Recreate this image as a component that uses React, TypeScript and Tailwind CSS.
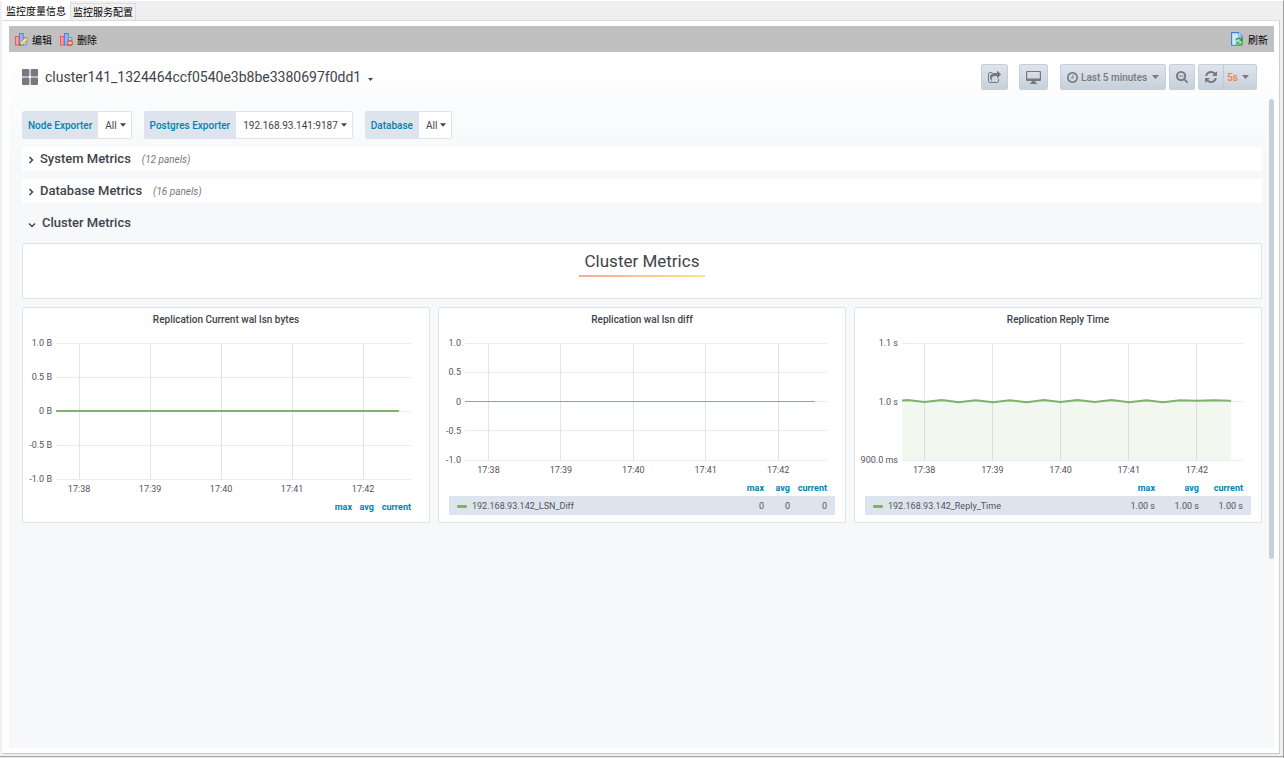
import React, { useId, useState } from "react";

const FA_CLOCK =
  "M896 544v448q0 14-9 23t-23 9h-320q-14 0-23-9t-9-23v-64q0-14 9-23t23-9h224v-352q0-14 9-23t23-9h64q14 0 23 9t9 23zm416 352q0-148-73-273t-198-198-273-73-273 73-198 198-73 273 73 273 198 198 273 73 273-73 198-198 73-273zm224 0q0 209-103 385.5t-279.5 279.5-385.5 103-385.5-103-279.5-279.5-103-385.5 103-385.5 279.5-279.5 385.5-103 385.5 103 279.5 279.5 103 385.5z";
const FA_REFRESH =
  "M1511 928q0 5-1 7-64 268-268 434.5t-478 166.5q-146 0-282.5-55t-243.5-157l-129 129q-19 19-45 19t-45-19-19-45v-448q0-26 19-45t45-19h448q26 0 45 19t19 45-19 45l-137 137q71 66 161 102t187 36q134 0 250-65t186-179q11-17 53-117 8-23 30-23h192q13 0 22.5 9.5t9.5 22.5zm25-800v448q0 26-19 45t-45 19h-448q-26 0-45-19t-19-45 19-45l138-138q-148-137-349-137-134 0-250 65t-186 179q-11 17-53 117-8 23-30 23h-199q-13 0-22.5-9.5t-9.5-22.5v-7q65-268 270-434.5t480-166.5q146 0 284 55.5t245 156.5l130-129q19-19 45-19t45 19 19 45z";
const FA_SEARCH_MINUS =
  "M1024 736v64q0 13-9.5 22.5t-22.5 9.5h-576q-13 0-22.5-9.5t-9.5-22.5v-64q0-13 9.5-22.5t22.5-9.5h576q13 0 22.5 9.5t9.5 22.5zm128 32q0-185-131.5-316.5t-316.5-131.5-316.5 131.5-131.5 316.5 131.5 316.5 316.5 131.5 316.5-131.5 131.5-316.5zm512 832q0 53-37.5 90.5t-90.5 37.5q-54 0-90-38l-343-342q-179 124-399 124-143 0-273.5-55.5t-225-150-150-225-55.5-273.5 55.5-273.5 150-225 225-150 273.5-55.5 273.5 55.5 225 150 150 225 55.5 273.5q0 220-124 399l343 343q37 37 37 90z";
const FA_SHARE =
  "M1408 989v259q0 119-84.5 203.5t-203.5 84.5h-832q-119 0-203.5-84.5t-84.5-203.5v-832q0-119 84.5-203.5t203.5-84.5h255q13 0 22.5 9.5t9.5 22.5q0 27-26 32-77 26-133 60-10 4-16 4h-112q-66 0-113 47t-47 113v832q0 66 47 113t113 47h832q66 0 113-47t47-113v-214q0-19 18-29 28-13 54-37 16-16 35-8 21 9 21 29zm237-496l-384 384q-18 19-45 19-12 0-25-5-39-17-39-59v-192h-160q-323 0-438 131-119 137-74 473 3 23-20 34-8 2-12 2-16 0-26-13-10-14-21-31t-39.5-68.5-49.5-99.5-38.5-114-17.5-122q0-49 3.5-91t14-90 28-88 47-81.5 68.5-74 94.5-61.5 124.5-48.5 159.5-30.5 196.5-11h160v-192q0-42 39-59 13-5 25-5 26 0 45 19l384 384q19 19 19 45t-19 45z";

function Glyph({ d, box, className }: { d: string; box: string; className: string }) {
  return (
    <svg viewBox={box} className={className} fill="currentColor" aria-hidden="true">
      <path d={d} />
    </svg>
  );
}

function Caret({ className = "h-1 w-[7px]" }: { className?: string }) {
  return (
    <svg viewBox="0 0 7 4" className={className} fill="currentColor" aria-hidden="true">
      <path d="M0 0h7L3.5 4z" />
    </svg>
  );
}

function ChartBars() {
  return (
    <>
      <rect x="0.4" y="3.4" width="3.6" height="8.600" fill="#ff9c9c" stroke="#e84a4a" strokeWidth="0.8" />
      <rect x="4.4" y="0.4" width="3.8" height="11.600" fill="#8db9ff" stroke="#3f76e4" strokeWidth="0.8" />
      <rect x="8.600" y="4.4" width="3.2" height="7.600" fill="#b9d3fb" stroke="#5b8be8" strokeWidth="0.8" />
    </>
  );
}

function EditIcon() {
  return (
    <svg viewBox="0 0 13 13" className="h-[13px] w-[13px]" aria-hidden="true">
      <ChartBars />
      <path d="M4.800 12.500l.7-3.200L10.700 4.300l2.100 2.200-5.200 5.200z" fill="#fbdc85" stroke="#b98a3a" strokeWidth=".7" />
      <path d="M4.600 12.700l.4-1.700 1.300 1.300z" fill="#6a4516" />
    </svg>
  );
}

function DeleteIcon() {
  return (
    <svg viewBox="0 0 13 13" className="h-[13px] w-[13px]" aria-hidden="true">
      <ChartBars />
      <circle cx="10" cy="10" r="2.800" fill="#f36c2e" stroke="#d04c14" strokeWidth=".5" />
      <rect x="8.300" y="9.400" width="3.400" height="1.200" fill="#fff" />
    </svg>
  );
}

function ReloadIcon() {
  return (
    <svg viewBox="0 0 13 14" className="h-[14px] w-[13px]" aria-hidden="true">
      <path d="M.6.6h7l3.200 3.200v9.400H.6z" fill="#d3e7fc" stroke="#3d80d0" strokeWidth="1.100" />
      <path d="M7.600.6v3.200h3.200" fill="#fff" stroke="#3d80d0" strokeWidth=".7" />
      <path d="M4.300 8.200C5 5.300 8.700 4.600 10.600 6.200l1.500-1.100v4.200H7.700l1.400-1.400C8 7 6.300 7.200 5.900 8.400z" fill="#3fa548" />
      <path d="M12.700 10.200c-.8 3-4.400 3.700-6.400 2.100l-1.400 1.200V9.500h4.300l-1.400 1.300c1 .9 2.900.7 3.300-.6z" fill="#5cba52" />
    </svg>
  );
}

const navButton =
  "flex h-[26px] items-center justify-center rounded-[2px] border border-[#c7d0d9] bg-gradient-to-b from-[#dde4ed] to-[#c7d0d9] text-[#767980]";

function Variable({ label, value }: { label: string; value: string }) {
  const id = useId();
  return (
    <div className="flex h-7 items-stretch">
      <label
        htmlFor={id}
        className="flex items-center rounded-l-[2px] border border-[#dde4ed] bg-[#dde4ed] px-[5px] text-[10px] font-medium text-[#0083b3]"
      >
        {label}
      </label>
      <div className="relative flex items-center rounded-r-[2px] border border-l-0 border-[#dde4ed] bg-white text-[#41444b]">
        <select id={id} className="field-sizing-content h-full appearance-none bg-transparent pr-[14px] pl-[7px] text-[10px] outline-none">
          <option>{value}</option>
        </select>
        <span className="pointer-events-none absolute right-[5px]">
          <Caret className="h-1 w-1.5" />
        </span>
      </div>
    </div>
  );
}

function Chevron({ open }: { open: boolean }) {
  return (
    <svg viewBox="0 0 8 8" className="h-2 w-2" fill="none" stroke="currentColor" strokeWidth="1.5" aria-hidden="true">
      <path d={open ? "M1 2.500l3 3 3-3" : "M2.500 1l3 3-3 3"} />
    </svg>
  );
}

function CollapsedRow({ title, count }: { title: string; count: number }) {
  return (
    <button type="button" aria-expanded={false} className="flex h-6 w-full items-center bg-white pl-[5px] text-left">
      <span className="mt-0.5 text-[#41444b]">
        <Chevron open={false} />
      </span>
      <span className="ml-[5px] text-[13px] font-medium text-[#41444b]">{title}</span>
      <span className="ml-[11px] text-[10px] text-[#767980] italic">({count} panels)</span>
    </button>
  );
}

const times = ["17:38", "17:39", "17:40", "17:41", "17:42"];
const tickAt = [6.5, 26.5, 46.5, 66.5, 86.5];

type Series = { points: string; thick: boolean; filled: boolean };

function Plot({ labels, series, axisClass, heightClass, height }: {
  labels: string[];
  series: Series;
  axisClass: string;
  heightClass: string;
  height: number;
}) {
  return (
    <div className="flex pr-[18px]">
      <div className={`-my-[5px] flex shrink-0 flex-col justify-between pr-1 text-right text-[9px] leading-[10px] whitespace-nowrap ${axisClass}`}>
        {labels.map((l) => (
          <span key={l}>{l}</span>
        ))}
      </div>
      <svg className={`min-w-0 flex-1 overflow-visible ${heightClass}`} aria-hidden="true">
        {labels.map((l, i) => {
          const y = `${(i * 100) / (labels.length - 1)}%`;
          return <line key={l} x1="0" x2="100%" y1={y} y2={y} stroke="#ebebeb" shapeRendering="crispEdges" />;
        })}
        {tickAt.map((x) => (
          <line key={x} x1={`${x}%`} x2={`${x}%`} y1="0" y2="100%" stroke="#e4e4e4" shapeRendering="crispEdges" />
        ))}
        <svg width="100%" height="100%" viewBox="0 0 100 100" preserveAspectRatio="none">
          {series.filled && <polygon points={`0,100 ${series.points} 96.5,100`} fill="#7eb26d" fillOpacity="0.1" />}
          <polyline
            points={series.points}
            fill="none"
            stroke="#7eb26d"
            strokeWidth={series.thick ? 2 : 1}
            vectorEffect="non-scaling-stroke"
            shapeRendering={series.thick ? "auto" : "crispEdges"}
          />
        </svg>
        {times.map((t, i) => (
          <text key={t} x={`${tickAt[i]}%`} y={height + 13} textAnchor="middle" fontSize="9" fill="#52545c">
            {t}
          </text>
        ))}
      </svg>
    </div>
  );
}

function Legend({ name, values, colClass, lastClass }: {
  name?: string;
  values?: string[];
  colClass: string;
  lastClass: string;
}) {
  return (
    <table className="w-full border-collapse text-[9px] leading-[12px]">
      <thead>
        <tr className="text-right text-[#0083b3]">
          <td />
          <th className={`pb-0.5 text-right font-bold ${colClass}`}>max</th>
          <th className={`pb-0.5 text-right font-bold ${colClass}`}>avg</th>
          <th className={`pr-2 pb-0.5 text-right font-bold ${lastClass}`}>current</th>
        </tr>
      </thead>
      {name && values && (
        <tbody>
          <tr className="h-[19px] bg-[#dde4ed] text-[#52545c]">
            <td className="pl-2">
              <span className="flex items-center gap-[5px]">
                <span className="mt-0.5 h-[3px] w-2.5 rounded-[1px] bg-[#7eb26d]" />
                {name}
              </span>
            </td>
            {values.map((v, i) => (
              <td key={i} className={i === 2 ? "pr-2 text-right" : "text-right"}>
                {v}
              </td>
            ))}
          </tr>
        </tbody>
      )}
    </table>
  );
}

function Panel({ title, children }: { title: string; children: React.ReactNode }) {
  return (
    <section className="flex h-[216px] min-w-0 flex-1 flex-col rounded-[2px] border border-[#dde4ed] bg-white text-[#52545c]">
      <h3 className="h-[35px] pt-1 text-center text-[10px] leading-4 font-medium text-[#41444b]">{title}</h3>
      {children}
    </section>
  );
}

const flat = "0,50 96.6,50";
const wave =
  "0,49.2 1.7,48.7 6.6,50.4 11.7,48.7 16.6,50.6 21.6,48.9 26.7,50.6 31.6,48.9 36.6,50.6 41.6,48.7 46.5,50.4 51.5,48.7 56.5,50.4 61.5,48.7 66.6,50.6 71.6,49 76.6,50.6 81.5,49 86.6,49.4 91.5,49 96.5,49.4";

export default function App() {
  const [tab, setTab] = useState(0);
  return (
    <div className="flex min-h-screen flex-col border-t border-r border-t-white border-r-[#a0a0a0] bg-[#efefef] font-['Roboto','Noto_Sans_CJK_SC',sans-serif] text-[#52545c]">
      <div role="tablist" className="flex h-[19px] items-end pl-0.5 font-['Noto_Sans_CJK_SC',sans-serif] text-[10px] leading-4 text-black">
        {["监控度量信息", "监控服务配置"].map((t, i) => (
          <button
            key={t}
            type="button"
            role="tab"
            aria-selected={tab === i}
            onClick={() => setTab(i)}
            className={
              tab === i
                ? "h-[19px] border-r border-[#dcdcdc] bg-white px-1"
                : "h-[17px] border-t border-r border-[#dcdcdc] bg-[#f0f0f0] px-0.5"
            }
          >
            {t}
          </button>
        ))}
      </div>
      <main className="mr-[3px] ml-0.5 flex flex-1 flex-col border border-t-[#dcdcdc] border-r-[#d0d0d0] border-b-[#c8c8c8] border-l-white bg-white pt-[5px] pr-[5px] pb-[5px] pl-1.5">
        <div className="flex h-[26px] items-center justify-between bg-[#c0c0c0] px-1.5 font-['Noto_Sans_CJK_SC',sans-serif] text-[10px] text-black">
          <div className="flex gap-2">
            <button type="button" className="flex items-center gap-1">
              <EditIcon />
              编辑
            </button>
            <button type="button" className="flex items-center gap-1">
              <DeleteIcon />
              删除
            </button>
          </div>
          <button type="button" className="flex items-center gap-1">
            <ReloadIcon />
            刷新
          </button>
        </div>

        <div className="relative flex-1 bg-[#f7f8fa] bg-[linear-gradient(180deg,#ffffff_0px,#f7f8fa_110px)] pr-3 pl-[13px]">
          <header className="flex h-[50px] items-center justify-between pr-[5px]">
            <button type="button" className="flex items-center text-[14px] text-[#41444b]">
              <svg viewBox="0 0 16 16" className="mr-[7px] h-4 w-4" fill="#767980" aria-hidden="true">
                <rect x="0" y="0" width="7.400" height="7.400" rx="1" />
                <rect x="8.600" y="0" width="7.400" height="7.400" rx="1" />
                <rect x="0" y="8.600" width="7.400" height="7.400" rx="1" />
                <rect x="8.600" y="8.600" width="7.400" height="7.400" rx="1" />
              </svg>
              cluster141_1324464ccf0540e3b8be3380697f0dd1
              <span className="mt-1 ml-[7px]">
                <Caret className="h-[3px] w-[5px]" />
              </span>
            </button>
            <div className="flex items-center">
              <button type="button" aria-label="Share" className={`${navButton} w-[27px]`}>
                <Glyph d={FA_SHARE} box="0 0 1664 1536" className="h-3 w-[13px]" />
              </button>
              <button type="button" aria-label="Cycle view mode" className={`${navButton} ml-[11px] w-[29px]`}>
                <svg viewBox="0 0 15 13" className="h-[13px] w-[15px]" fill="currentColor" aria-hidden="true">
                  <path fillRule="evenodd" d="M1 0h13a1 1 0 0 1 1 1v8a1 1 0 0 1-1 1H9.200l.5 1.700h1V13H4.300v-1.300h1L5.800 10H1a1 1 0 0 1-1-1V1a1 1 0 0 1 1-1zm.2 1.100v6.400h12.600V1.100z" />
                </svg>
              </button>
              <button type="button" className={`${navButton} ml-3 px-1.5 text-[10px] font-medium`}>
                <Glyph d={FA_CLOCK} box="0 128 1536 1536" className="mr-[3px] h-[11px] w-[11px]" />
                Last 5 minutes
                <Caret className="ml-[5px] h-1 w-[7px]" />
              </button>
              <button type="button" aria-label="Zoom out" className={`${navButton} ml-[3px] w-[26px]`}>
                <Glyph d={FA_SEARCH_MINUS} box="0 64 1664 1664" className="h-3 w-3" />
              </button>
              <div className={`${navButton} ml-[3px]`}>
                <button type="button" aria-label="Refresh dashboard" className="flex h-full w-[25px] items-center justify-center border-r border-[#c0c9d3]">
                  <Glyph d={FA_REFRESH} box="0 0 1536 1536" className="h-3 w-3" />
                </button>
                <span className="relative flex h-full items-center">
                  <select aria-label="Refresh interval" className="field-sizing-content h-full appearance-none bg-transparent pr-[18px] pl-[3px] text-[10px] font-medium text-[#ff7941] outline-none">
                    <option>5s</option>
                  </select>
                  <span className="pointer-events-none absolute right-[7px]">
                    <Caret />
                  </span>
                </span>
              </div>
            </div>
          </header>

          <div className="mt-[9px] flex gap-3">
            <Variable label="Node Exporter" value="All" />
            <Variable label="Postgres Exporter" value="192.168.93.141:9187" />
            <Variable label="Database" value="All" />
          </div>

          <div className="mt-2 flex flex-col gap-2">
            <CollapsedRow title="System Metrics" count={12} />
            <CollapsedRow title="Database Metrics" count={16} />
            <button type="button" aria-expanded className="flex h-6 w-full items-center pl-1.5 text-left text-[13px] font-medium text-[#41444b]">
              <span className="mt-1 mr-1.5">
                <Chevron open />
              </span>
              Cluster Metrics
            </button>
            <section className="flex h-14 flex-col items-center rounded-[2px] border border-[#dde4ed] bg-white pt-[5px]">
              <h2 className="px-[6px] text-[17px] leading-6 text-[#41444b]">
                Cluster Metrics
                <span className="-mx-[6px] mt-0.5 block h-0.5 bg-gradient-to-r from-[#f9a89b] to-[#fbe38a]" />
              </h2>
            </section>

            <div className="flex gap-2">
              <Panel title="Replication Current wal lsn bytes">
                <Plot
                  labels={["1.0 B", "0.5 B", "0 B", "-0.5 B", "-1.0 B"]}
                  series={{ points: flat, thick: true, filled: false }}
                  axisClass="w-[33px]"
                  heightClass="h-[136px]"
                  height={136}
                />
                <div className="px-[10px] pt-[22px]">
                  <Legend colClass="w-[22px]" lastClass="w-[45px]" />
                </div>
              </Panel>
              <Panel title="Replication wal lsn diff">
                <Plot
                  labels={["1.0", "0.5", "0", "-0.5", "-1.0"]}
                  series={{ points: flat, thick: false, filled: false }}
                  axisClass="w-[26px]"
                  heightClass="h-[117px]"
                  height={117}
                />
                <div className="px-[10px] pt-[22px]">
                  <Legend name="192.168.93.142_LSN_Diff" values={["0", "0", "0"]} colClass="w-[26px]" lastClass="w-[45px]" />
                </div>
              </Panel>
              <Panel title="Replication Reply Time">
                <Plot
                  labels={["1.1 s", "1.0 s", "900.0 ms"]}
                  series={{ points: wave, thick: true, filled: true }}
                  axisClass="w-[47px]"
                  heightClass="h-[117px]"
                  height={117}
                />
                <div className="px-[10px] pt-[22px]">
                  <Legend
                    name="192.168.93.142_Reply_Time"
                    values={["1.00 s", "1.00 s", "1.00 s"]}
                    colClass="w-[44px]"
                    lastClass="w-[52px]"
                  />
                </div>
              </Panel>
            </div>
          </div>
          <div className="absolute top-[47px] right-0 h-[460px] w-[5px] rounded-full bg-[#c7d0d9]" />
        </div>
      </main>
      <div className="mt-0.5 h-0.5 border-t border-[#a8a8a8] bg-[#e8e8e8]" />
    </div>
  );
}
